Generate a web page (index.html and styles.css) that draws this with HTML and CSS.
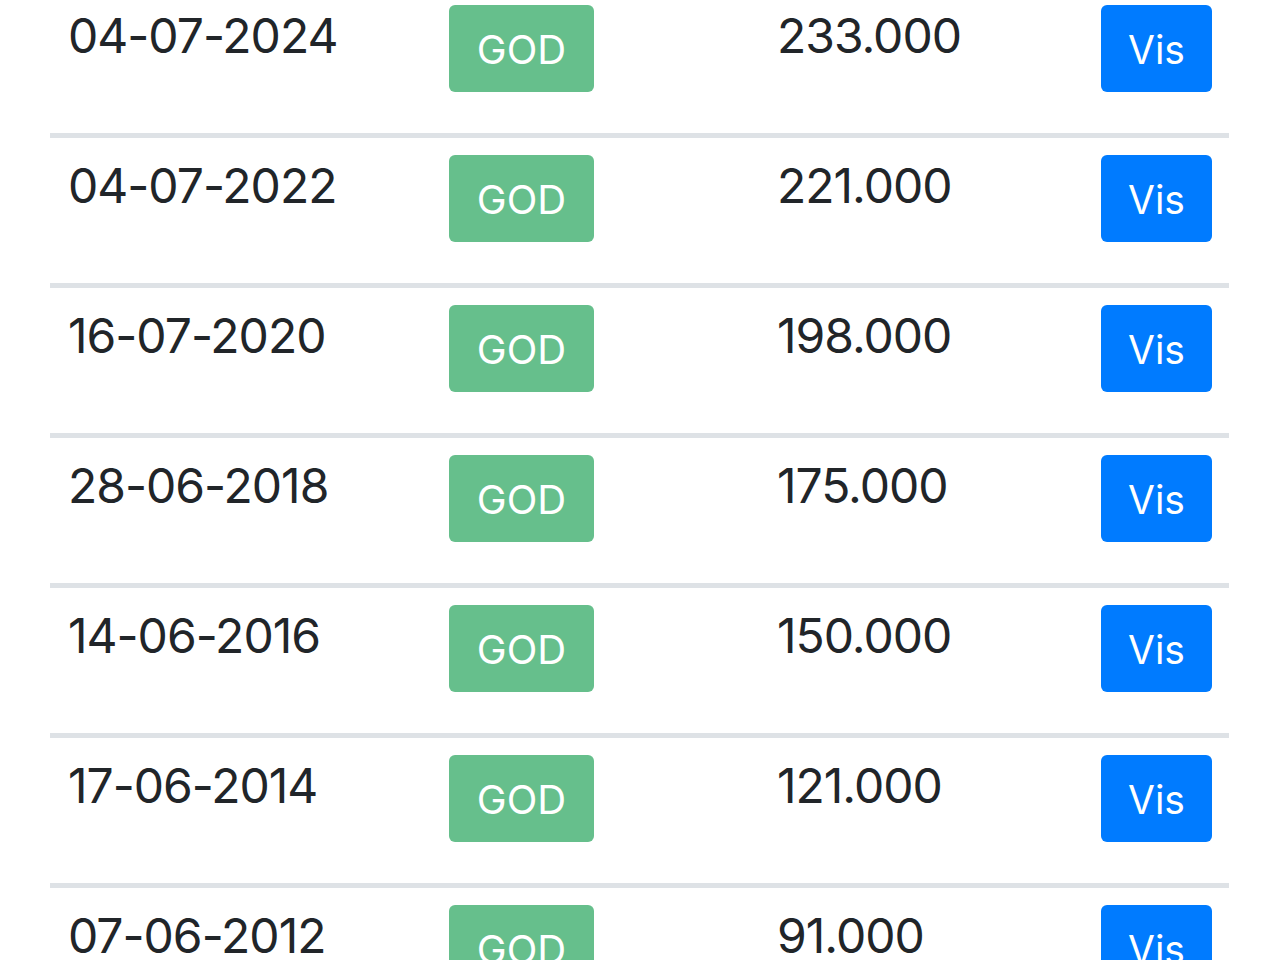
FILE: index.html
```html
<!DOCTYPE html>
<html lang="da">
<head>
    <meta charset="UTF-8">
    <meta name="viewport" content="width=device-width, initial-scale=1.0">
    <title>Vurderinger</title>
    <link rel="stylesheet" href="styles.css">
</head>
<body>
    <div class="list">
        <div class="row">
            <div class="date">04-07-2024</div>
            <div><span class="badge">GOD</span></div>
            <div class="amount">233.000</div>
            <div><a href="#" class="btn">Vis</a></div>
        </div>
        <div class="row">
            <div class="date">04-07-2022</div>
            <div><span class="badge">GOD</span></div>
            <div class="amount">221.000</div>
            <div><a href="#" class="btn">Vis</a></div>
        </div>
        <div class="row">
            <div class="date">16-07-2020</div>
            <div><span class="badge">GOD</span></div>
            <div class="amount">198.000</div>
            <div><a href="#" class="btn">Vis</a></div>
        </div>
        <div class="row">
            <div class="date">28-06-2018</div>
            <div><span class="badge">GOD</span></div>
            <div class="amount">175.000</div>
            <div><a href="#" class="btn">Vis</a></div>
        </div>
        <div class="row">
            <div class="date">14-06-2016</div>
            <div><span class="badge">GOD</span></div>
            <div class="amount">150.000</div>
            <div><a href="#" class="btn">Vis</a></div>
        </div>
        <div class="row">
            <div class="date">17-06-2014</div>
            <div><span class="badge">GOD</span></div>
            <div class="amount">121.000</div>
            <div><a href="#" class="btn">Vis</a></div>
        </div>
        <div class="row">
            <div class="date">07-06-2012</div>
            <div><span class="badge">GOD</span></div>
            <div class="amount">91.000</div>
            <div><a href="#" class="btn">Vis</a></div>
        </div>
    </div>
</body>
</html>
```

FILE: styles.css
```css
body { margin: 0; background-color: #ffffff; font-family: Inter, "Liberation Sans", sans-serif; color: #212529; overflow: hidden; }
.list { margin: -17px 51px 0 50px; }
.row { display: grid; grid-template-columns: 381px 330px 322px 111px; height: 150px; box-sizing: border-box; border-top: 5px solid #dee2e6; padding: 17px 0 0 18px; }
.date, .amount { font-size: 48px; line-height: 62px; letter-spacing: -1px; }
.amount { margin-left: -2px; }
.badge { display: flex; align-items: center; justify-content: center; width: 145px; height: 87px; border-radius: 6px; background-color: #66bf8c; color: #ffffff; font-size: 40px; padding-top: 2px; box-sizing: border-box; }
.btn { display: flex; align-items: center; justify-content: center; width: 111px; height: 87px; border-radius: 6px; background-color: #007bff; color: #ffffff; font-size: 39px; text-decoration: none; padding-top: 2px; box-sizing: border-box; }
```
